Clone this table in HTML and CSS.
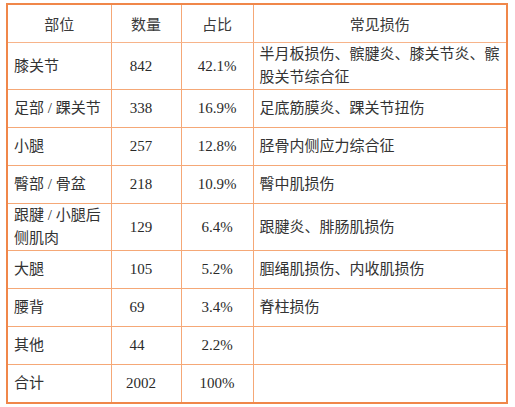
FILE: index.html
```html
<!DOCTYPE html>
<html lang="zh">
<head>
<meta charset="utf-8">
<link rel="stylesheet" href="styles.css">
</head>
<body>
<table class="injury">
  <colgroup>
    <col class="c1"><col class="c2"><col class="c3"><col class="c4">
  </colgroup>
  <thead>
    <tr class="head">
      <th>部位</th><th>数量</th><th>占比</th><th>常见损伤</th>
    </tr>
  </thead>
  <tbody>
    <tr class="tall"><td class="part">膝关节</td><td class="num">842</td><td class="pct">42.1%</td><td class="desc">半月板损伤、髌腱炎、膝关节炎、髌股关节综合征</td></tr>
    <tr><td class="part">足部 / 踝关节</td><td class="num">338</td><td class="pct">16.9%</td><td class="desc">足底筋膜炎、踝关节扭伤</td></tr>
    <tr><td class="part">小腿</td><td class="num">257</td><td class="pct">12.8%</td><td class="desc">胫骨内侧应力综合征</td></tr>
    <tr><td class="part">臀部 / 骨盆</td><td class="num">218</td><td class="pct">10.9%</td><td class="desc">臀中肌损伤</td></tr>
    <tr class="tall"><td class="part">跟腱 / 小腿后侧肌肉</td><td class="num">129</td><td class="pct">6.4%</td><td class="desc">跟腱炎、腓肠肌损伤</td></tr>
    <tr><td class="part">大腿</td><td class="num">105</td><td class="pct">5.2%</td><td class="desc">腘绳肌损伤、内收肌损伤</td></tr>
    <tr><td class="part">腰背</td><td class="num short">69</td><td class="pct">3.4%</td><td class="desc">脊柱损伤</td></tr>
    <tr><td class="part">其他</td><td class="num short">44</td><td class="pct">2.2%</td><td class="desc"></td></tr>
    <tr><td class="part">合计</td><td class="num">2002</td><td class="pct">100%</td><td class="desc"></td></tr>
  </tbody>
</table>
</body>
</html>
```
FILE: styles.css
```css
html, body {
  margin: 0;
  padding: 0;
  background: #ffffff;
}

body {
  padding: 3px 0 0 6px;
}

.injury {
  border-collapse: collapse;
  border: 2px solid #f0874a;
  width: 500px;
  table-layout: fixed;
  font-family: "Liberation Serif", "Noto Sans CJK SC", serif;
  font-size: 15px;
  line-height: 23px;
  color: #2a2a2a;
}

.c1 { width: 104px; }
.c2 { width: 70px; }
.c3 { width: 72px; }
.c4 { width: 254px; }

.injury th,
.injury td {
  border: 1px solid #f5a877;
  padding: 0 4px 0 6px;
  vertical-align: middle;
}

.head th {
  height: 37px;
  font-family: "Noto Sans CJK SC", "Liberation Sans", sans-serif;
  font-weight: normal;
  color: #3a3a3a;
  text-align: center;
  padding: 0;
  border-bottom-color: #f7b48a;
}

.injury tbody tr {
  height: 38px;
}

.injury tbody tr.tall {
  height: 47px;
}

.part {
  text-align: left;
  color: #333333;
}

.num {
  text-align: center;
  padding: 0 10px 0 0 !important;
}

.num.short {
  padding: 0 18px 0 0 !important;
}

.pct {
  text-align: center;
  padding: 0 !important;
}

.desc {
  text-align: left;
  color: #333333;
}
```
